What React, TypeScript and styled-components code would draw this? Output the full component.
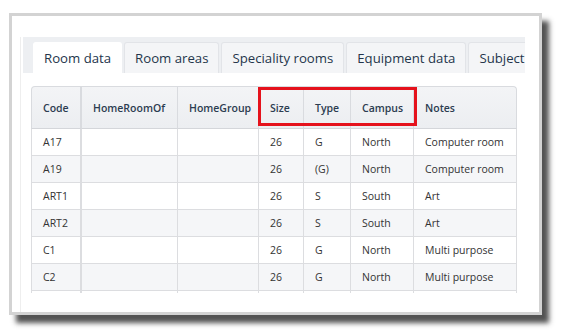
import styled, { createGlobalStyle } from 'styled-components'

type Room = {
	code: string
	homeRoomOf: string
	homeGroup: string
	size: string
	type: string
	campus: string
	notes: string
}

const GlobalStyle = createGlobalStyle`
	html, body {
		margin: 0;
		padding: 0;
		background: #ffffff;
	}
	body {
		font-family: 'Open Sans', 'Noto Sans', sans-serif;
	}
`

const Page = styled.div`
	width: 562px;
	height: 331px;
	padding: 13px 0 0 9px;
	box-sizing: border-box;
	overflow: hidden;
`

const Frame = styled.div`
	width: 533px;
	height: 302px;
	box-sizing: border-box;
	border: 3px solid #d3d3d3;
	background: #ffffff;
	box-shadow: 7px 8px 5px rgba(40, 40, 40, 0.8);
	padding: 21px 0 0 8px;
	overflow: hidden;
`

const Panel = styled.div`
	width: 508px;
	height: 286px;
	box-sizing: border-box;
	border-left: 1px solid #eeeeee;
	border-bottom: 1px solid #eeeeee;
	padding-left: 2px;
`

const TabStrip = styled.div`
	width: 502px;
	height: 36px;
	background: #edeff2;
	display: flex;
	align-items: flex-end;
	gap: 2px;
	padding-left: 10px;
	box-sizing: border-box;
	overflow: hidden;
`

const Tab = styled.div<{ $active?: boolean }>`
	flex: none;
	height: 31px;
	box-sizing: border-box;
	padding: 0 10px;
	display: flex;
	align-items: center;
	font-size: 13.2px;
	font-weight: 500;
	color: #24354b;
	background: ${p => (p.$active ? '#ffffff' : '#f4f5f7')};
	border: 1px solid ${p => (p.$active ? '#ffffff' : '#e2e4e8')};
	border-bottom: none;
	border-radius: 3px 3px 0 0;
	white-space: nowrap;
`

const TableWrap = styled.div`
	position: relative;
	margin: 13px 0 0 8px;
	width: 486px;
	height: 207px;
	overflow: hidden;
`

const Table = styled.table`
	border-collapse: separate;
	border-spacing: 0;
	table-layout: fixed;
	width: 486px;
	font-size: 10.5px;
`

const HeadCell = styled.th<{ $w: number; $frozen?: boolean }>`
	width: ${p => p.$w}px;
	height: 43px;
	box-sizing: border-box;
	padding: 0 0 0 11px;
	text-align: left;
	font-weight: 600;
	font-size: 10.5px;
	color: #2c3c50;
	background: linear-gradient(#f3f4f6, #eceef1);
	border-top: 1px solid #d9dbdf;
	border-bottom: 1px solid #d4d6da;
	border-right: ${p => (p.$frozen ? '2px' : '1px')} solid #d9dbdf;
	white-space: nowrap;

	&:first-child {
		border-left: 1px solid #d9dbdf;
		border-top-left-radius: 4px;
	}
	&:last-child {
		border-top-right-radius: 4px;
	}
`

const Row = styled.tr<{ $striped: boolean }>`
	background: ${p => (p.$striped ? '#f5f6f8' : '#ffffff')};
`

const Cell = styled.td<{ $frozen?: boolean }>`
	height: 27px;
	box-sizing: border-box;
	padding: 0 0 0 11px;
	color: #333333;
	border-bottom: 1px solid #dcdde0;
	border-right: ${p => (p.$frozen ? '2px' : '1px')} solid #dcdde0;
	white-space: nowrap;

	&:first-child {
		border-left: 1px solid #dcdde0;
	}
`

const Highlight = styled.div`
	position: absolute;
	left: 227px;
	top: 1px;
	width: 159px;
	height: 39px;
	box-sizing: border-box;
	border: 3px solid #e5121c;
	pointer-events: none;
`

const columns = [
	{ key: 'code', label: 'Code', width: 51 },
	{ key: 'homeRoomOf', label: 'HomeRoomOf', width: 96 },
	{ key: 'homeGroup', label: 'HomeGroup', width: 81 },
	{ key: 'size', label: 'Size', width: 45 },
	{ key: 'type', label: 'Type', width: 47 },
	{ key: 'campus', label: 'Campus', width: 63 },
	{ key: 'notes', label: 'Notes', width: 103 },
] as const

const rooms: Room[] = [
	{ code: 'A17', homeRoomOf: '', homeGroup: '', size: '26', type: 'G', campus: 'North', notes: 'Computer room' },
	{ code: 'A19', homeRoomOf: '', homeGroup: '', size: '26', type: '(G)', campus: 'North', notes: 'Computer room' },
	{ code: 'ART1', homeRoomOf: '', homeGroup: '', size: '26', type: 'S', campus: 'South', notes: 'Art' },
	{ code: 'ART2', homeRoomOf: '', homeGroup: '', size: '26', type: 'S', campus: 'South', notes: 'Art' },
	{ code: 'C1', homeRoomOf: '', homeGroup: '', size: '26', type: 'G', campus: 'North', notes: 'Multi purpose' },
	{ code: 'C2', homeRoomOf: '', homeGroup: '', size: '26', type: 'G', campus: 'North', notes: 'Multi purpose' },
	{ code: '', homeRoomOf: '', homeGroup: '', size: '', type: '', campus: '', notes: '' },
]

const tabs = ['Room data', 'Room areas', 'Speciality rooms', 'Equipment data', 'Subject rooms']

function App() {
	return (
		<Page>
			<GlobalStyle />
			<Frame>
				<Panel>
					<TabStrip>
						{tabs.map((tab, i) => (
							<Tab key={tab} $active={i === 0}>
								{tab}
							</Tab>
						))}
					</TabStrip>
					<TableWrap>
						<Table>
							<thead>
								<tr>
									{columns.map((col, i) => (
										<HeadCell key={col.key} $w={col.width} $frozen={i === 0}>
											{col.label}
										</HeadCell>
									))}
								</tr>
							</thead>
							<tbody>
								{rooms.map((room, r) => (
									<Row key={r} $striped={r % 2 === 1}>
										{columns.map((col, i) => (
											<Cell key={col.key} $frozen={i === 0}>
												{room[col.key]}
											</Cell>
										))}
									</Row>
								))}
							</tbody>
						</Table>
						<Highlight />
					</TableWrap>
				</Panel>
			</Frame>
		</Page>
	)
}

export default App
